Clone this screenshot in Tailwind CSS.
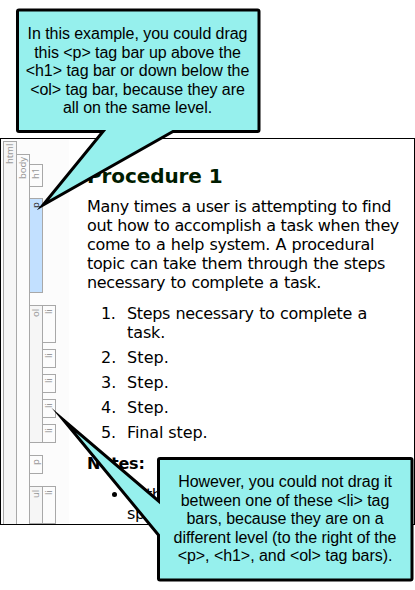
<!DOCTYPE html>
<html lang="en">
<head>
<meta charset="utf-8">
<title>Procedure 1</title>
<script src="https://cdn.jsdelivr.net/npm/@tailwindcss/browser@4"></script>
</head>
<body class="bg-white">
<div class="relative w-[415px] h-[590px] overflow-hidden pt-[138px] text-black">
  <main class="flex w-[415px] h-[387px] overflow-hidden border border-black font-['DejaVu_Sans',Verdana,sans-serif]">
    <aside class="flex w-[68px] shrink-0 bg-[#fcfcfc] pl-[2px] pt-[2px] text-[9.5px] leading-[12px] tracking-[-0.1px] text-[#9a9a9a] font-['Noto_Sans',sans-serif]">
      <div class="flex w-[14px] justify-center border border-b-0 border-[#a8a8a8] bg-[#f6f6f6] pt-[3px]"><span class="[writing-mode:vertical-rl] rotate-180 h-[19px]">html</span></div>
      <div class="-ml-px mt-[13px] flex w-[14px] justify-center border border-b-0 border-[#a8a8a8] bg-[#fcfcfc] pt-[2px]"><span class="[writing-mode:vertical-rl] rotate-180 h-[22px]">body</span></div>
      <div class="-ml-px flex flex-col pt-[23px]">
        <div class="flex h-[23px] w-[14px] justify-center border border-[#a8a8a8] pt-[3px]"><span class="[writing-mode:vertical-rl] rotate-180 h-[11px]">h1</span></div>
        <div class="mt-[11px] flex h-[95px] w-[14px] justify-center border border-[#a8a8a8] bg-[#c2e0ff] pt-[3px] text-[#333]"><span class="[writing-mode:vertical-rl] rotate-180 h-[6px]">p</span></div>
        <div class="mt-[12px] flex h-[138px]">
          <div class="flex w-[14px] justify-center border border-[#a8a8a8] bg-[#f6f6f6] pt-[3px]"><span class="[writing-mode:vertical-rl] rotate-180 h-[8px]">ol</span></div>
          <div class="-ml-px flex flex-col gap-[6px]">
            <div class="flex h-[38px] w-[14px] justify-center border border-[#a8a8a8] pt-[3px]"><span class="[writing-mode:vertical-rl] rotate-180 h-[5px]">li</span></div>
            <div class="flex h-[19px] w-[14px] justify-center border border-[#a8a8a8] pt-[3px]"><span class="[writing-mode:vertical-rl] rotate-180 h-[5px]">li</span></div>
            <div class="flex h-[19px] w-[14px] justify-center border border-[#a8a8a8] pt-[3px]"><span class="[writing-mode:vertical-rl] rotate-180 h-[5px]">li</span></div>
            <div class="flex h-[19px] w-[14px] justify-center border border-[#a8a8a8] pt-[3px]"><span class="[writing-mode:vertical-rl] rotate-180 h-[5px]">li</span></div>
            <div class="flex h-[19px] w-[14px] justify-center border border-[#a8a8a8] pt-[3px]"><span class="[writing-mode:vertical-rl] rotate-180 h-[5px]">li</span></div>
          </div>
        </div>
        <div class="mt-[12px] flex h-[19px] w-[14px] shrink-0 justify-center border border-[#a8a8a8] pt-[3px]"><span class="[writing-mode:vertical-rl] rotate-180 h-[6px]">p</span></div>
        <div class="mt-[12px] flex h-[38px] shrink-0">
          <div class="flex w-[14px] justify-center border border-[#a8a8a8] bg-[#f6f6f6] pt-[3px]"><span class="[writing-mode:vertical-rl] rotate-180 h-[8px]">ul</span></div>
          <div class="-ml-px flex w-[14px] justify-center border border-[#a8a8a8] pt-[3px]"><span class="[writing-mode:vertical-rl] rotate-180 h-[5px]">li</span></div>
        </div>
      </div>
    </aside>
    <article class="pl-[18px] pt-[25px] text-[16px] leading-[19px] tracking-[-0.35px] whitespace-nowrap">
      <h1 class="text-[20px] leading-[24px] font-bold tracking-[-0.1px] text-[#001c00]">Procedure 1</h1>
      <div class="mt-[9px] [text-align-last:justify]">
        <p class="w-[304px]">Many times a user is attempting to find</p>
        <p class="w-[312px]">out how to accomplish a task when they</p>
        <p class="w-[287px]">come to a help system. A procedural</p>
        <p class="w-[298px]">topic can take them through the steps</p>
        <p class="w-[234px]">necessary to complete a task.</p>
      </div>
      <ol class="mt-[12px] flex flex-col gap-[6px] pl-[14px]">
        <li class="flex"><span class="w-[26px]">1.</span><div><p class="w-[240px] [text-align-last:justify]">Steps necessary to complete a</p><p class="tracking-[-0.1px]">task.</p></div></li>
        <li class="flex tracking-[0.1px]"><span class="w-[26px]">2.</span>Step.</li>
        <li class="flex tracking-[0.1px]"><span class="w-[26px]">3.</span>Step.</li>
        <li class="flex tracking-[0.1px]"><span class="w-[26px]">4.</span>Step.</li>
        <li class="flex tracking-[-0.1px]"><span class="w-[26px]">5.</span>Final step.</li>
      </ol>
      <h2 class="mt-[12px] text-[16px] font-bold tracking-[-0.2px]">Notes:</h2>
      <ul class="mt-[12px] pl-[40px]">
        <li class="relative"><i class="absolute -left-[15px] top-[7px] size-[5px] rounded-full bg-black"></i>In the<br>spe</li>
      </ul>
    </article>
  </main>
  <svg class="absolute inset-0" width="415" height="590" viewBox="0 0 415 590" fill="#96f0ed" stroke="#000" stroke-width="3" stroke-miterlimit="20">
    <path d="M19 10H257.500Q259 10 259 11.500V130Q259 131.500 257.500 131.500H173L43 205L103 131.500H19Q17.500 131.500 17.500 130V11.500Q17.500 10 19 10Z"/>
    <path d="M160 458.500H410.500Q412 458.500 412 460V578.500Q412 580 410.500 580H160Q158.500 580 158.500 578.500V535L63.500 420L158.500 501V460Q158.500 458.500 160 458.500Z"/>
  </svg>
  <div class="absolute left-[16px] top-[25px] flex w-[243px] flex-col items-center text-[16px] leading-[18.500px] tracking-[-0.05px] whitespace-nowrap font-['Liberation_Sans',Arial,sans-serif]">
    <p>In this example, you could drag</p><p>this &lt;p&gt; tag bar up above the</p><p>&lt;h1&gt; tag bar or down below the</p><p>&lt;ol&gt; tag bar, because they are</p><p>all on the same level.</p>
  </div>
  <div class="absolute left-[158px] top-[473px] flex w-[254px] flex-col items-center text-[16px] leading-[18.500px] tracking-[-0.05px] whitespace-nowrap font-['Liberation_Sans',Arial,sans-serif]">
    <p>However, you could not drag it</p><p>between one of these &lt;li&gt; tag</p><p>bars, because they are on a</p><p>different level (to the right of the</p><p>&lt;p&gt;, &lt;h1&gt;, and &lt;ol&gt; tag bars).</p>
  </div>
</div>
</body>
</html>
